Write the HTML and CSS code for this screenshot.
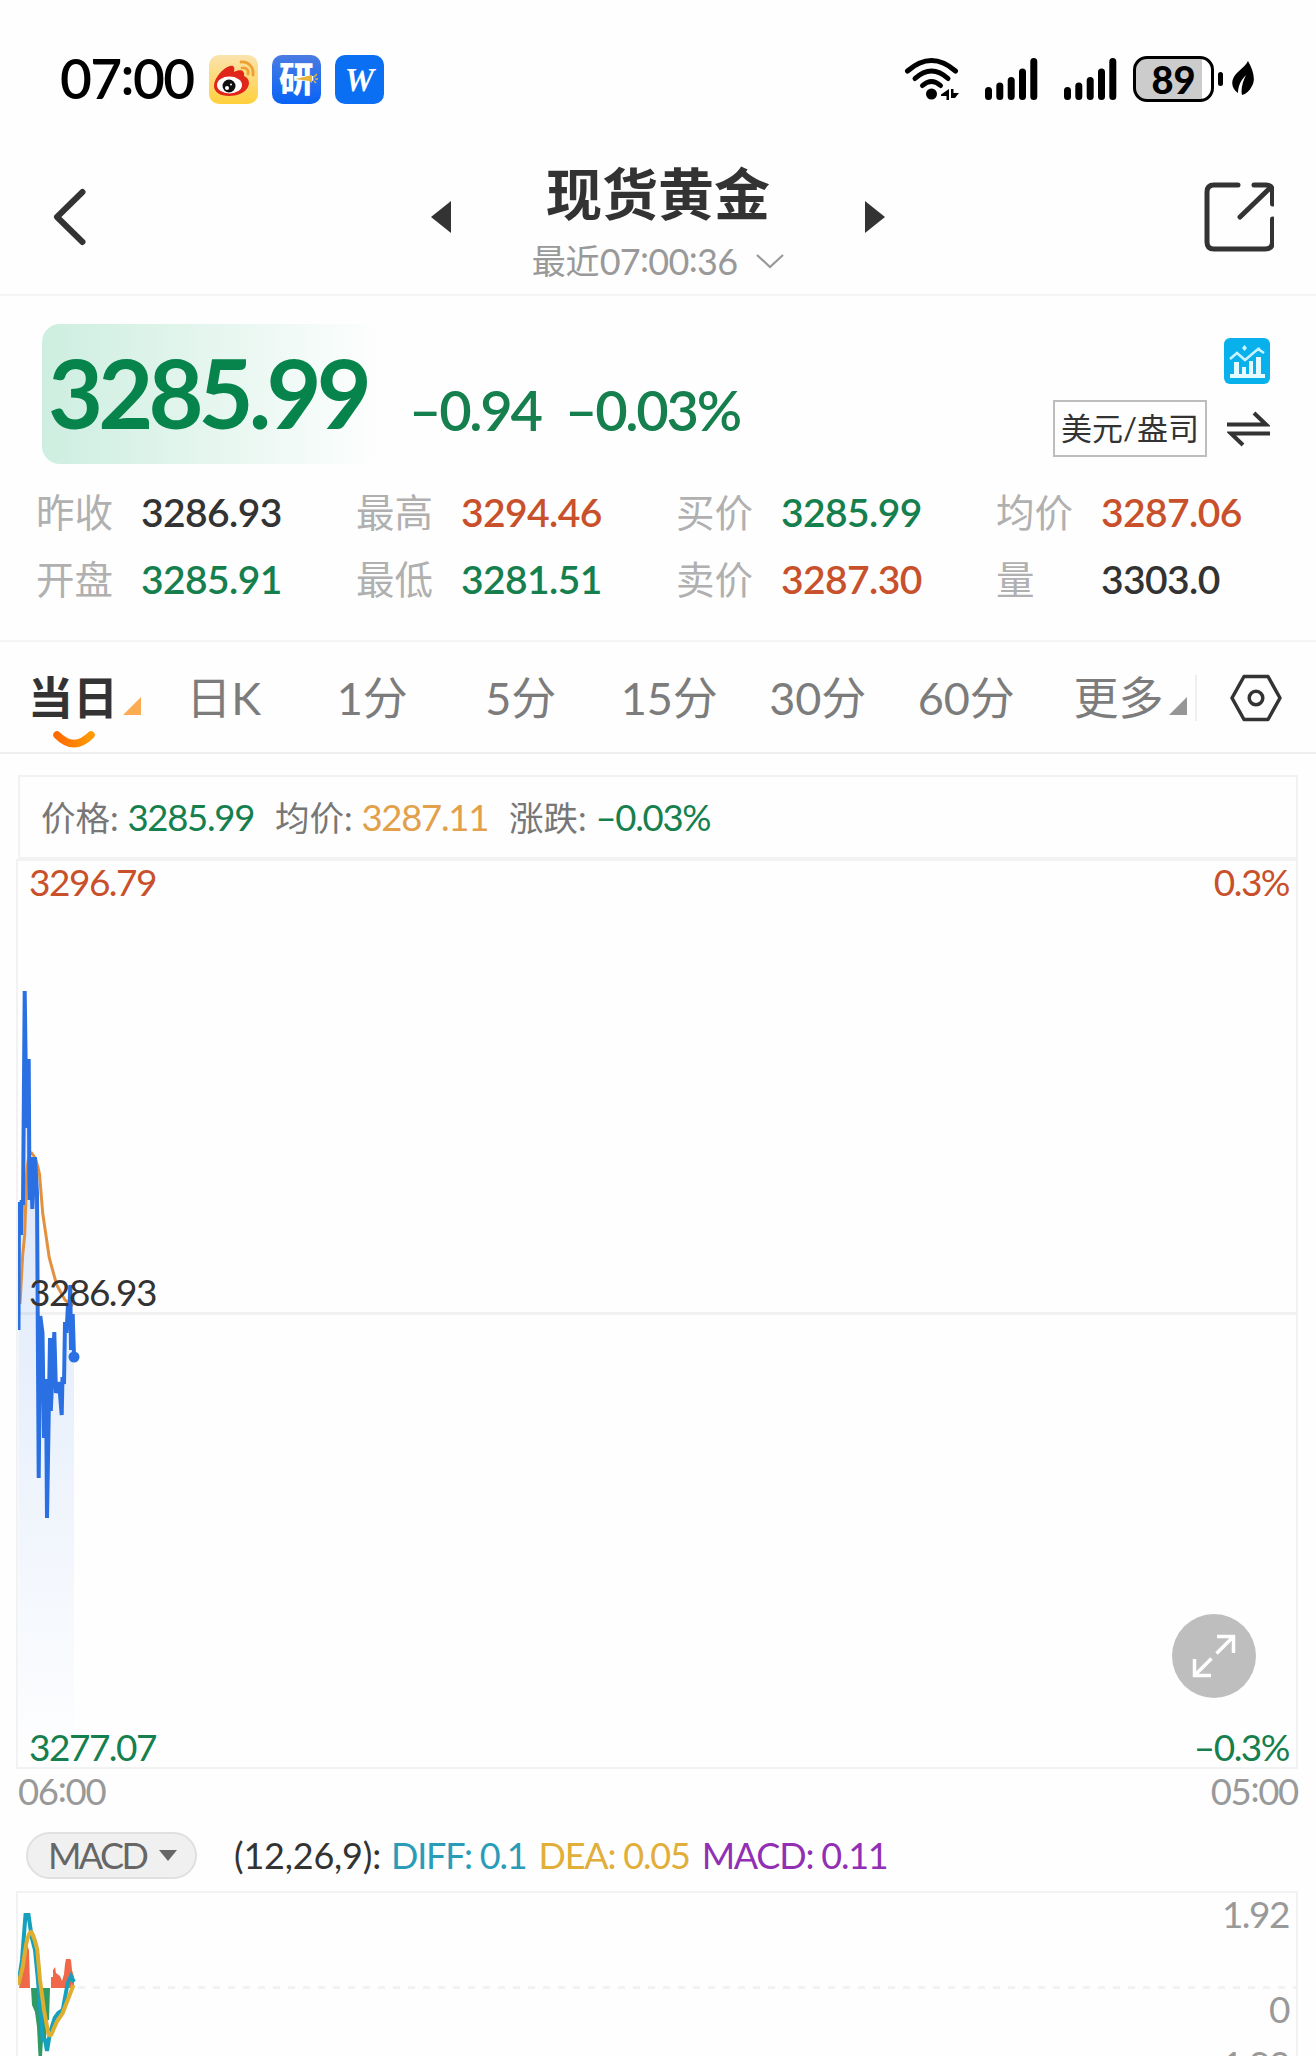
FILE: index.html
```html
<!DOCTYPE html>
<html lang="zh-CN">
<head>
    <meta charset="UTF-8">
    <meta name="viewport" content="width=device-width, initial-scale=1.0">
    <title>现货黄金</title>
    <link rel="stylesheet" href="styles.css">
</head>
<body>
<div class="status-bar">
    <span class="clock">07<i class="colon">:</i>00</span>
    <div class="app-icons">
        <svg width="49" height="49" viewBox="0 0 49 49">
            <defs>
                <linearGradient id="weiboBg" x1="0" y1="0" x2="0" y2="1">
                    <stop offset="0" stop-color="#fbe3ae"/>
                    <stop offset="1" stop-color="#ffd03c"/>
                </linearGradient>
            </defs>
            <rect width="49" height="49" rx="10" fill="url(#weiboBg)"/>
            <path d="M5 31C5 23 14 13 21 11c4-1 5 2 4 6 6-3 11-2 10 4 5 2 6 7 4 11-3 6-11 9-19 9C11 41 5 37 5 31z" fill="#e1251b"/>
            <ellipse cx="20.500" cy="30" rx="12.500" ry="8.500" fill="#fff"/>
            <circle cx="20" cy="31" r="6.500" fill="#111"/>
            <circle cx="18" cy="33" r="2" fill="#fff"/>
            <circle cx="22" cy="29.500" r="1" fill="#fff"/>
            <path d="M32 7c7-1 13 5 12 13M33 13c4-1 7 2 6 6" fill="none" stroke="#f0a030" stroke-width="2.800" stroke-linecap="round"/>
        </svg>
        <div class="yan-icon">
            <span>研</span>
            <svg width="24" height="12" viewBox="0 0 24 12">
                <path d="M0 6L17 2v8L14 8z" fill="#e5b43c"/>
                <path d="M19 4l3-3M20 6h3M19 8l2 2" stroke="#e5b43c" stroke-width="1.500"/>
            </svg>
        </div>
        <div class="w-icon">W</div>
    </div>
    <div class="system-icons">
        <svg class="wifi" width="56" height="44" viewBox="0 0 56 44">
            <g fill="none" stroke="#000" stroke-width="5" stroke-linecap="round">
                <path d="M3.500 14Q27.500-7 51.500 14"/>
                <path d="M11 21.500Q27.500 6.500 44 21.500"/>
                <path d="M18.500 28.500Q27.500 20.500 36.500 28.500"/>
            </g>
            <circle cx="27.500" cy="37" r="5.500"/>
            <path d="M45 32v11h-2.500v-4H37v-1.500zM47 32h2.500v4H55l-4 5h-4z"/>
        </svg>
        <svg class="signal" width="54" height="44" viewBox="0 0 54 44">
            <path d="M4.500 33.500v6M15.800 29v10.500M27.200 23.500v16M38.500 15v24.500M49.800 4.500v35" stroke="#000" stroke-width="7" stroke-linecap="round"/>
        </svg>
        <svg class="signal" width="54" height="44" viewBox="0 0 54 44">
            <path d="M4.500 33.500v6M15.800 29v10.500M27.200 23.500v16M38.500 15v24.500M49.800 4.500v35" stroke="#000" stroke-width="7" stroke-linecap="round"/>
        </svg>
        <div class="battery">89</div>
        <span class="battery-tip"></span>
        <svg class="leaf" width="22" height="36" viewBox="0 0 22 36">
            <path d="M16 0c5 9 8 18 4 25-2.500 5-6 8-10 9-1.500-6 1-14 4-20-5 5-8 11-8 18C1 29-1 23 1 18 4 10 12 8 16 0z"/>
        </svg>
    </div>
</div>

<div class="nav">
    <svg class="back" width="34" height="58" viewBox="0 0 34 58">
        <path d="M30.500 4L5 29l25.500 25" fill="none" stroke="#333" stroke-width="6" stroke-linecap="round" stroke-linejoin="round"/>
    </svg>
    <div class="nav-center">
        <span class="arrow arrow-left"></span>
        <div class="title-block">
            <h1>现货黄金</h1>
            <p class="updated">最近<span class="updated-time">07<i class="colon">:</i>00<i class="colon">:</i>36</span>
                <svg width="28" height="16" viewBox="0 0 28 16">
                    <path d="M1 2l13 12L27 2" fill="none" stroke="#999" stroke-width="2.200"/>
                </svg>
            </p>
        </div>
        <span class="arrow arrow-right"></span>
    </div>
    <svg class="share" width="70" height="70" viewBox="0 0 70 70">
        <g fill="none" stroke="#333" stroke-width="5" stroke-linecap="round">
            <path d="M34 3H10Q3 3 3 10v50q0 7 7 7h51q7.500 0 7.500-7V37"/>
            <path d="M50 3h12q6.500 0 6.500 7v12M36 35L66 6"/>
        </g>
    </svg>
</div>

<div class="quote">
    <div class="quote-top">
        <div class="price-box">3285.99</div>
        <span class="change">–0.94</span>
        <span class="change percent">–0.03%</span>
        <div class="quote-tools">
            <svg width="46" height="46" viewBox="0 0 46 46">
                <rect width="46" height="46" rx="6" fill="#08b1eb"/>
                <path d="M6 21l7-6 8 7 13-11 6 4" fill="none" stroke="#c9f4ff" stroke-width="2.500"/>
                <path d="M20.500 7l2.500 3-2.500 3-2.500-3zM35 9l3 4h-6z" fill="#c9f4ff"/>
                <path d="M6 40v-4h4V24h5v12h3v-7h4v7h3V23h4v13h3V19h5v17h4v4z" fill="#e4fbff"/>
            </svg>
            <div class="unit-row">
                <span class="unit">美元/盎司</span>
                <svg width="43" height="36" viewBox="0 0 43 36">
                    <path d="M0 13.500h39L27 2M43 22.500H4L16 34" fill="none" stroke="#333" stroke-width="4"/>
                </svg>
            </div>
        </div>
    </div>
    <div class="stats">
        <div class="stat"><label>昨收</label><span>3286.93</span></div>
        <div class="stat"><label>最高</label><span class="up">3294.46</span></div>
        <div class="stat"><label>买价</label><span class="down">3285.99</span></div>
        <div class="stat"><label>均价</label><span class="up">3287.06</span></div>
        <div class="stat"><label>开盘</label><span class="down">3285.91</span></div>
        <div class="stat"><label>最低</label><span class="down">3281.51</span></div>
        <div class="stat"><label>卖价</label><span class="up">3287.30</span></div>
        <div class="stat"><label>量</label><span>3303.0</span></div>
    </div>
</div>

<div class="tabs">
    <div class="tab active">当日<i class="corner"></i>
        <svg class="smile" width="44" height="20" viewBox="0 0 44 20">
            <defs>
                <linearGradient id="smileFill">
                    <stop offset="0" stop-color="#ff6a00"/>
                    <stop offset="1" stop-color="#ff9a05"/>
                </linearGradient>
            </defs>
            <path d="M5 5Q22 22 39 5" fill="none" stroke="url(#smileFill)" stroke-width="7.500" stroke-linecap="round"/>
        </svg>
    </div>
    <div class="tab">日K</div>
    <div class="tab">1分</div>
    <div class="tab">5分</div>
    <div class="tab">15分</div>
    <div class="tab">30分</div>
    <div class="tab">60分</div>
    <div class="tab more">更多<i class="corner"></i></div>
    <svg class="settings" width="52" height="48" viewBox="0 0 52 48">
        <path d="M14 2.500h24L50 24 38 45.500H14L2 24z" fill="none" stroke="#333" stroke-width="3.500" stroke-linejoin="round"/>
        <circle cx="26" cy="24" r="6.800" fill="none" stroke="#333" stroke-width="3.500"/>
    </svg>
</div>

<div class="chart-area">
    <div class="info-bar">
        <span>价格: <b class="down">3285.99</b></span>
        <span>均价: <b class="avg">3287.11</b></span>
        <span>涨跌: <b class="down">–0.03%</b></span>
    </div>
    <div class="price-chart">
        <svg width="1278" height="906" viewBox="0 4 1278 906">
            <defs>
                <linearGradient id="areaFill" gradientUnits="userSpaceOnUse" x1="0" y1="134" x2="0" y2="911">
                    <stop offset="0" stop-color="#2a72e5" stop-opacity="0.2"/>
                    <stop offset="1" stop-color="#2a72e5" stop-opacity="0"/>
                </linearGradient>
            </defs>
            <path d="M0 456.500H1280" stroke="#f1f1f1" stroke-width="3"/>
            <path d="M0.500 473L1 345 3 378 3.700 343 5 348 6.700 134 8.500 271 10.700 202 11.500 343 13 300 14.300 352 17 300 19 336 20.700 621 22.300 459 24.500 476 26 581 28 522 29 661 32 481 32.800 554 36.300 475 38 536 41 525 43.700 558 44.500 520 46 527 47 465 48.500 476 50 447 50.800 470 52.300 428 53 493 54.700 457 56 499V911H0.500z" fill="url(#areaFill)"/>
            <path d="M2 447L4.700 398 6.700 378 8.700 317Q10 296 13.700 296 18 300 21.500 317L24.700 356 31.300 401 38.700 428 47 443 55 449" fill="none" stroke="#e3913f" stroke-width="3"/>
            <path d="M0.500 473L1 345 3 378 3.700 343 5 348 6.700 134 8.500 271 10.700 202 11.500 343 13 300 14.300 352 17 300 19 336 20.700 621 22.300 459 24.500 476 26 581 28 522 29 661 32 481 32.800 554 36.300 475 38 536 41 525 43.700 558 44.500 520 46 527 47 465 48.500 476 50 447 50.800 470 52.300 428 53 493 54.700 457 56 499" fill="none" stroke="#2a70e3" stroke-width="4" stroke-linejoin="bevel"/>
            <circle cx="56" cy="500" r="5.500" fill="#2a70e3"/>
        </svg>
        <span class="axis top left up">3296.79</span>
        <span class="axis top right up">0.3%</span>
        <span class="axis middle left">3286.93</span>
        <span class="axis bottom left down">3277.07</span>
        <span class="axis bottom right down">–0.3%</span>
        <div class="expand">
            <svg width="44" height="44" viewBox="0 0 44 44">
                <path d="M25 2.500h16.500V19M41 3L24.500 19.500M2.500 25v16.500H19M3 41l16.500-16.500" fill="none" stroke="#fff" stroke-width="3.500"/>
            </svg>
        </div>
    </div>
    <div class="time-axis">
        <span>06<i class="colon">:</i>00</span>
        <span>05<i class="colon">:</i>00</span>
    </div>
    <div class="indicator-bar">
        <div class="indicator-name">MACD<i class="caret"></i></div>
        <div class="indicator-values">
            <span class="params">(12,26,9):</span>
            <span class="diff">DIFF: 0.1</span>
            <span class="dea">DEA: 0.05</span>
            <span class="macd">MACD: 0.11</span>
        </div>
    </div>
    <div class="macd-chart">
        <svg width="1278" height="163" viewBox="0 3 1278 163">
            <path d="M60 97.500H1280" stroke="#f2f2f2" stroke-width="3" stroke-dasharray="7 8"/>
            <path d="M1 98L5 80 9 55 11 60 12 98zM33 98V87H35V80L37 77 38 83 42 86 44 91 46 84 47 74 48 69H52L53 70 54 80 56 87V98z" fill="#f0674a"/>
            <path d="M13 98L14 115 17 122 19 137 20.500 166H24L25 150 28 149 29 130H31L32 98z" fill="#2f9a63"/>
            <path d="M0.300 95L4 70 7.500 25H10.500L13.700 47 17 60 19.700 87 24.700 150H27L29 161 32 143 36.700 128 40.300 123 44.700 120 49.700 93 53 86 56 92" fill="none" stroke="#15a0bd" stroke-width="4"/>
            <path d="M0.300 95L4.700 77 8 55Q11 41 13.500 42 17 49 19.300 60L22 90 26 120 30 142Q32 148 34 143L38.700 132 44.700 123 55.500 95" fill="none" stroke="#e0ae2e" stroke-width="4"/>
        </svg>
        <span class="axis macd-max">1.92</span>
        <span class="axis macd-zero">0</span>
        <span class="axis macd-min">–1.92</span>
    </div>
</div>
</body>
</html>
```
FILE: styles.css
```css
* {
    box-sizing: border-box;
}

body {
    margin: 0;
    width: 1316px;
    height: 2056px;
    overflow: hidden;
    background-color: #fefefe;
    font-family: Lato, "Noto Sans CJK SC", sans-serif;
    color: #333;
}

svg {
    display: block;
    flex-shrink: 0;
}

h1, p {
    margin: 0;
}

.up {
    color: #c8502b;
}

.down {
    color: #15804e;
}

.colon {
    font-style: normal;
    line-height: 0;
    vertical-align: 0.08em;
}

.status-bar {
    height: 150px;
    padding: 8px 62px 0 60px;
    display: flex;
    align-items: center;
    color: #000;
}

.clock {
    width: 149px;
    padding-bottom: 2px;
    font-size: 55px;
    font-weight: 600;
    letter-spacing: -1.6px;
    white-space: nowrap;
}

.app-icons {
    display: flex;
    gap: 14px;
}

.yan-icon, .w-icon {
    position: relative;
    width: 49px;
    height: 49px;
    border-radius: 10px;
    color: #fff;
    text-align: center;
}

.yan-icon {
    background: linear-gradient(#4a7be2, #0863f6);
    font-size: 35px;
    font-weight: 900;
    line-height: 46px;
}

.yan-icon svg {
    position: absolute;
    left: 23px;
    top: 18px;
}

.w-icon {
    background: #0a6ff2;
    font-family: "Liberation Serif", serif;
    font-size: 33px;
    font-weight: 700;
    font-style: italic;
    line-height: 50px;
}

.system-icons {
    margin-left: auto;
    display: flex;
    align-items: center;
}

.wifi {
    margin-right: 24px;
}

.signal {
    margin-right: 25px;
}

.signal + .battery {
    margin-left: -9px;
}

.battery {
    width: 81px;
    height: 46px;
    border: 3.5px solid #000;
    border-radius: 14px;
    background: linear-gradient(90deg, #ccc 66px, #fff 66px);
    font-size: 38px;
    font-weight: 900;
    line-height: 41px;
    text-align: center;
}

.battery-tip {
    width: 5px;
    height: 14px;
    margin: 0 9px 0 4px;
    border-radius: 3px;
    background: #000;
}

.leaf {
    margin-top: 0;
}

.nav {
    height: 146px;
    padding: 0 42px 10px 52px;
    display: flex;
    align-items: center;
    justify-content: space-between;
    border-bottom: 2px solid #f5f5f5;
}

.back {
    margin-right: 26px;
}

.nav-center {
    width: 454px;
    display: flex;
    align-items: center;
    justify-content: space-between;
}

.arrow {
    border: 16px solid transparent;
}

.arrow-left {
    border-left-width: 0;
    border-right: 20px solid #333;
}

.arrow-right {
    border-right-width: 0;
    border-left: 20px solid #333;
}

.title-block {
    margin-top: 10px;
    text-align: center;
}

h1 {
    font-size: 56px;
    line-height: 66px;
    font-weight: 700;
}

.updated {
    display: flex;
    align-items: center;
    justify-content: center;
    padding-top: 12px;
    font-size: 34px;
    line-height: 44px;
    color: #999;
}

.updated-time {
    font-size: 36px;
    letter-spacing: -0.7px;
}

.updated svg {
    margin-left: 19px;
}

.quote {
    height: 346px;
    padding: 28px 46px 0 36px;
    border-bottom: 2px solid #f5f5f5;
}

.quote-top {
    display: flex;
    height: 140px;
    padding-left: 6px;
}

.price-box {
    width: 340px;
    height: 140px;
    padding-left: 6px;
    border-radius: 18px;
    background: linear-gradient(90deg, #cdeee0, #fefefe);
    color: #06844b;
    font-size: 95px;
    font-weight: 700;
    line-height: 137px;
    letter-spacing: -4.9px;
    white-space: nowrap;
}

.change {
    width: 156px;
    margin-left: 27px;
    padding-top: 52px;
    color: #15804e;
    font-size: 56px;
    font-weight: 600;
    line-height: 68px;
    letter-spacing: -2.3px;
    white-space: nowrap;
}

.percent {
    width: auto;
    margin-left: 0;
}

.quote-tools {
    margin-left: auto;
    padding-top: 14px;
    display: flex;
    flex-direction: column;
    align-items: flex-end;
    gap: 16px;
}

.unit-row {
    display: flex;
    align-items: center;
    gap: 20px;
}

.unit {
    width: 154px;
    height: 57px;
    border: 2px solid #bdbdbd;
    font-size: 31px;
    line-height: 53px;
    text-align: center;
    white-space: nowrap;
}

.stats {
    display: grid;
    grid-template-columns: repeat(4, 320px);
    grid-auto-rows: 67px;
    padding-top: 14px;
}

.stat {
    display: flex;
    align-items: center;
    font-size: 39px;
    font-weight: 600;
    letter-spacing: -0.6px;
}

.stat label {
    width: 105px;
    padding-bottom: 4px;
    font-size: 38.5px;
    font-weight: 400;
    letter-spacing: 0;
    color: #b0b0b0;
}

.tabs {
    display: flex;
    align-items: center;
    height: 112px;
    padding-top: 2px;
    border-bottom: 2px solid #eee;
    font-size: 45px;
    color: #7c7c7c;
}

.tab {
    position: relative;
    width: 148.5px;
    text-align: center;
    line-height: 60px;
    white-space: nowrap;
}

.tab.active {
    width: 149.5px;
    padding-left: 28px;
    text-align: left;
    font-weight: 700;
    color: #333;
}

.tab.more {
    width: 154px;
    padding-left: 31px;
    text-align: left;
    margin-left: 2px;
    border-right: 2px solid #eee;
    line-height: 46px;
}

.corner {
    display: inline-block;
    margin-left: 5px;
    border-left: 18px solid transparent;
    border-bottom: 18px solid #969696;
}

.active .corner {
    border-bottom-color: #fbac52;
}

.smile {
    position: absolute;
    left: 52px;
    top: 62px;
}

.settings {
    margin-left: 33px;
}

.chart-area {
    padding: 21px 18px 0;
}

.info-bar {
    display: flex;
    align-items: center;
    gap: 21px;
    height: 84px;
    padding: 0 0 2px 21px;
    border: 2px solid #f2f2f2;
    font-size: 34.5px;
    color: #777;
}

.info-bar b {
    font-size: 36.5px;
    font-weight: 400;
    letter-spacing: -1.3px;
}

.avg {
    color: #e2a04a;
}

.price-chart {
    position: relative;
    width: 1282px;
    height: 910px;
    margin-left: -2px;
    border: 2px solid #f2f2f2;
}

.axis {
    position: absolute;
    font-size: 37px;
    line-height: 40px;
    letter-spacing: -1.5px;
}

.left {
    left: 11px;
}

.right {
    right: 7px;
}

.top {
    top: 1px;
}

.middle {
    top: 411px;
}

.bottom {
    bottom: 0;
}

.expand {
    position: absolute;
    right: 40px;
    bottom: 69px;
    width: 84px;
    height: 84px;
    display: flex;
    align-items: center;
    justify-content: center;
    border-radius: 50%;
    background: #bebebe;
}

.time-axis {
    display: flex;
    justify-content: space-between;
    height: 62px;
    font-size: 36.5px;
    letter-spacing: -1.3px;
    color: #999;
}

.indicator-bar {
    display: flex;
    align-items: center;
    height: 48px;
    padding-left: 8px;
}

.indicator-name {
    display: flex;
    align-items: center;
    width: 171px;
    height: 47px;
    padding-left: 20px;
    border: 2px solid #e0e0e0;
    border-radius: 24px;
    background: #f0f0f0;
    font-size: 36px;
    letter-spacing: -2.6px;
    color: #666;
}

.caret {
    margin-left: 13px;
    border: 9px solid transparent;
    border-top: 11px solid #666;
    border-bottom: 0;
}

.indicator-values {
    display: flex;
    gap: 12px;
    padding-left: 37px;
    font-size: 36px;
    letter-spacing: -1.2px;
    white-space: nowrap;
}

.params {
    letter-spacing: -0.2px;
    margin-right: -2px;
}

.diff {
    color: #2a9cb8;
}

.dea {
    color: #e2ae3a;
}

.macd {
    color: #9130b5;
}

.macd-chart {
    position: relative;
    width: 1282px;
    height: 180px;
    margin: 12px 0 0 -2px;
    border: 2px solid #f2f2f2;
}

.macd-chart .axis {
    right: 7px;
    color: #999;
}

.macd-max {
    top: 1px;
}

.macd-zero {
    top: 96px;
}

.macd-min {
    top: 151px;
}
```
